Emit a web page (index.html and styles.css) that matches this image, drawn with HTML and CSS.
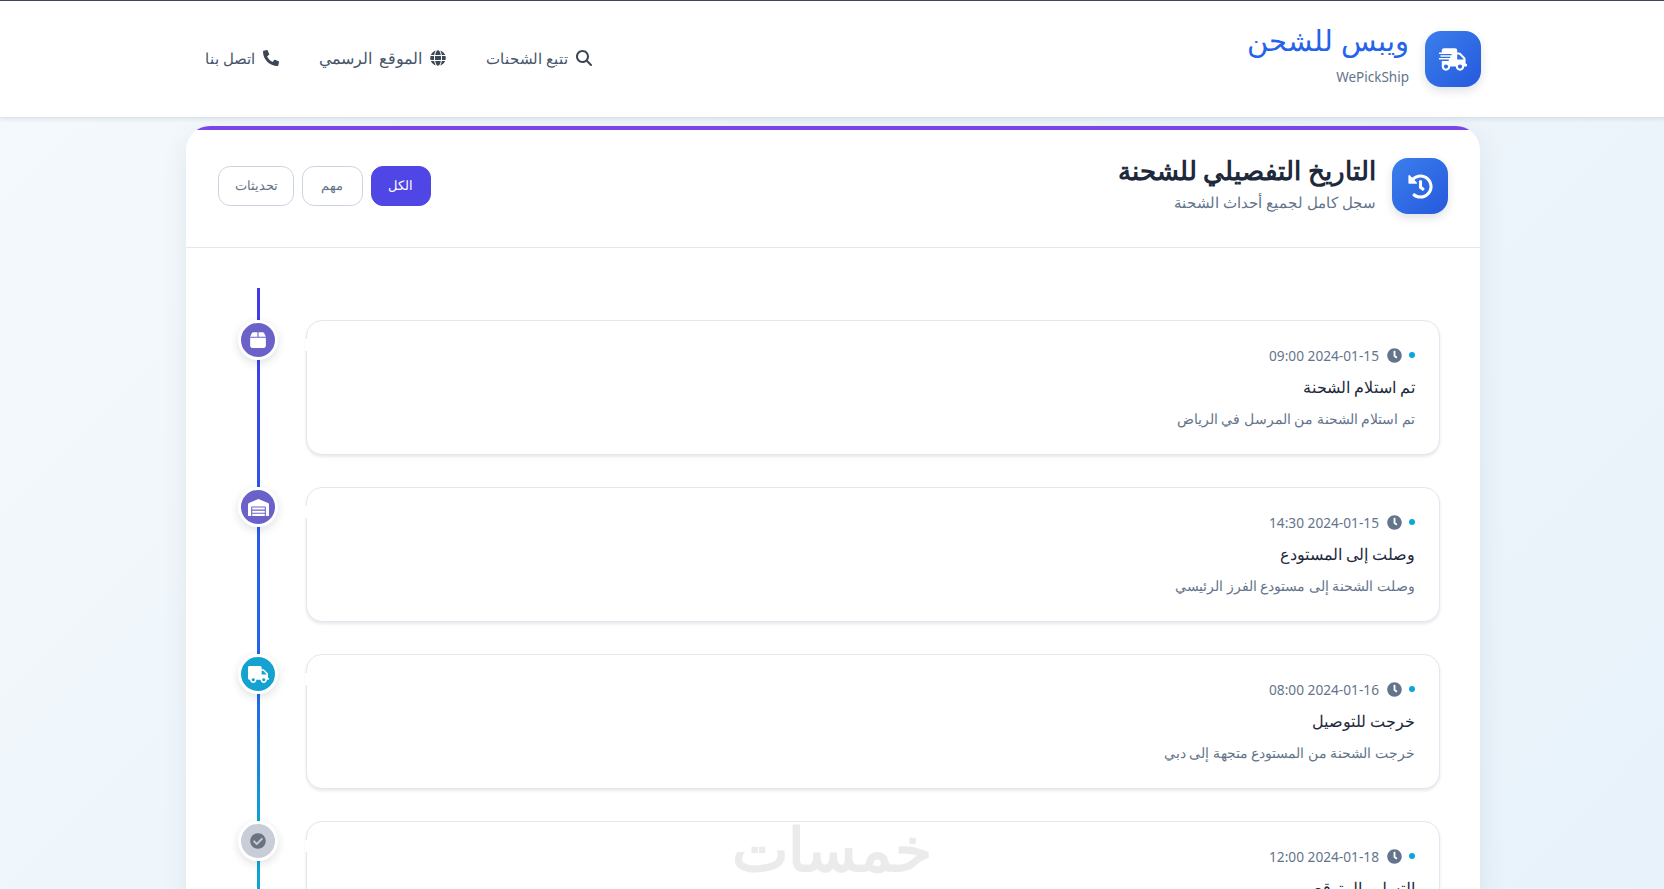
FILE: index.html
```html
<!DOCTYPE html>
<html lang="ar" dir="rtl">
<head>
  <meta charset="UTF-8">
  <meta name="viewport" content="width=device-width, initial-scale=1.0">
  <title>ويبس للشحن</title>
  <link rel="stylesheet" href="styles.css">
</head>
<body>
  <svg class="sprite" xmlns="http://www.w3.org/2000/svg">
    <symbol id="i-fast" viewBox="0 0 640 512"><path d="M624 352h-16V243.9c0-12.7-5.1-24.9-14.1-33.9L494 110.1c-9-9-21.2-14.1-33.9-14.1H416V48c0-26.5-21.5-48-48-48H112C85.5 0 64 21.5 64 48v48H8c-4.4 0-8 3.6-8 8v16c0 4.4 3.6 8 8 8h272c4.4 0 8 3.6 8 8v16c0 4.4-3.6 8-8 8H40c-4.4 0-8 3.6-8 8v16c0 4.4 3.6 8 8 8h208c4.4 0 8 3.6 8 8v16c0 4.4-3.6 8-8 8H8c-4.4 0-8 3.6-8 8v16c0 4.4 3.6 8 8 8h208c4.4 0 8 3.6 8 8v16c0 4.4-3.6 8-8 8H64v128c0 53 43 96 96 96s96-43 96-96h128c0 53 43 96 96 96s96-43 96-96h48c8.8 0 16-7.2 16-16v-32c0-8.8-7.2-16-16-16zM160 464c-26.5 0-48-21.5-48-48s21.5-48 48-48 48 21.5 48 48-21.5 48-48 48zm320 0c-26.5 0-48-21.5-48-48s21.5-48 48-48 48 21.5 48 48-21.5 48-48 48zm80-208H416V144h44.1l99.9 99.9V256z"/></symbol>
    <symbol id="i-truck" viewBox="0 0 640 512"><path d="M624 352h-16V243.9c0-12.7-5.1-24.9-14.1-33.9L494 110.1c-9-9-21.2-14.1-33.9-14.1H416V48c0-26.5-21.5-48-48-48H48C21.5 0 0 21.5 0 48v320c0 26.5 21.5 48 48 48h16c0 53 43 96 96 96s96-43 96-96h128c0 53 43 96 96 96s96-43 96-96h48c8.8 0 16-7.2 16-16v-32c0-8.8-7.2-16-16-16zM160 464c-26.5 0-48-21.5-48-48s21.5-48 48-48 48 21.5 48 48-21.5 48-48 48zm320 0c-26.5 0-48-21.5-48-48s21.5-48 48-48 48 21.5 48 48-21.5 48-48 48zm80-208H416V144h44.1l99.9 99.9V256z"/></symbol>
    <symbol id="i-history" viewBox="0 0 512 512"><path d="M504 255.531c.253 136.64-111.18 248.372-247.82 248.468-59.015.042-113.223-20.53-155.822-54.911-11.077-8.94-11.905-25.541-1.839-35.607l11.267-11.267c8.609-8.609 22.353-9.551 31.891-1.984C173.062 425.135 212.781 440 256 440c101.705 0 184-82.311 184-184 0-101.705-82.311-184-184-184-48.814 0-93.149 18.969-126.068 49.932l50.754 50.754c10.08 10.08 2.941 27.314-11.313 27.314H24c-8.837 0-16-7.163-16-16V38.627c0-14.254 17.234-21.393 27.314-11.314l49.372 49.372C129.209 34.136 189.552 8 256 8c136.81 0 247.747 110.78 248 247.531zm-180.912 78.784l9.823-12.63c8.138-10.463 6.253-25.542-4.21-33.679L288 256.349V152c0-13.255-10.745-24-24-24h-16c-13.255 0-24 10.745-24 24v135.651l65.409 50.874c10.463 8.137 25.541 6.253 33.679-4.21z"/></symbol>
    <symbol id="i-search" viewBox="0 0 512 512"><path d="M416 208c0 45.9-14.9 88.3-40 122.7L502.6 457.4c12.5 12.5 12.5 32.8 0 45.3s-32.8 12.5-45.3 0L330.7 376c-34.4 25.2-76.8 40-122.7 40C93.1 416 0 322.9 0 208S93.1 0 208 0S416 93.1 416 208zM208 352a144 144 0 1 0 0-288 144 144 0 1 0 0 288z"/></symbol>
    <symbol id="i-globe" viewBox="0 0 496 512"><path d="M336.5 160C322 70.7 287.8 8 248 8s-74 62.7-88.5 152h177zM152 256c0 22.2 1.2 43.5 3.3 64h185.3c2.1-20.5 3.3-41.8 3.3-64s-1.2-43.5-3.3-64H155.3c-2.1 20.5-3.3 41.8-3.3 64zm324.7-96c-28.6-67.9-86.5-120.4-158-141.6 24.4 33.8 41.2 84.7 50 141.6h108zM177.2 18.4C105.8 39.6 47.8 92.1 19.3 160h108c8.7-56.9 25.5-107.8 49.9-141.6zM487.4 192H372.7c2.1 21 3.3 42.5 3.3 64s-1.2 43-3.3 64h114.6c5.5-20.5 8.6-41.8 8.6-64s-3.1-43.5-8.5-64zM120 256c0-21.5 1.2-43 3.3-64H8.6C3.2 212.5 0 233.8 0 256s3.2 43.5 8.6 64h114.6c-2-21-3.2-42.5-3.2-64zm39.5 96c14.5 89.3 48.7 152 88.5 152s74-62.7 88.5-152h-177zm159.3 141.6c71.4-21.2 129.4-73.7 158-141.6h-108c-8.8 56.9-25.6 107.8-50 141.6zM19.3 352c28.6 67.9 86.5 120.4 158 141.6-24.4-33.8-41.2-84.7-50-141.6h-108z"/></symbol>
    <symbol id="i-phone" viewBox="0 0 512 512"><path d="M497.39 361.8l-112-48a24 24 0 0 0-28 6.9l-49.6 60.6A370.66 370.66 0 0 1 130.6 204.11l60.6-49.6a23.94 23.94 0 0 0 6.9-28l-48-112A24.16 24.16 0 0 0 122.6.61l-104 24A24 24 0 0 0 0 48c0 256.5 207.9 464 464 464a24 24 0 0 0 23.4-18.6l24-104a24.29 24.29 0 0 0-14.01-27.6z"/></symbol>
    <symbol id="i-clock" viewBox="0 0 512 512"><path d="M256 8C119 8 8 119 8 256s111 248 248 248 248-111 248-248S393 8 256 8zm92.49 313l-20 25a16 16 0 0 1-22.49 2.5l-67-49.72a40 40 0 0 1-15-31.23V112a16 16 0 0 1 16-16h32a16 16 0 0 1 16 16v144l58 42.5a16 16 0 0 1 2.49 22.5z"/></symbol>
    <symbol id="i-box" viewBox="0 0 448 512"><path d="M50.7 58.5L0 160H208V32H93.7C75.5 32 58.9 42.3 50.7 58.5zM240 160H448L397.3 58.5C389.1 42.3 372.5 32 354.3 32H240V160zm208 32H0V416c0 35.3 28.7 64 64 64H384c35.3 0 64-28.7 64-64V192z"/></symbol>
    <symbol id="i-warehouse" viewBox="0 0 640 512"><path d="M504 352H136.4c-4.4 0-8 3.6-8 8l-.1 48c0 4.4 3.6 8 8 8H504c4.4 0 8-3.6 8-8v-48c0-4.4-3.6-8-8-8zm0 96H136.1c-4.4 0-8 3.6-8 8l-.1 48c0 4.4 3.6 8 8 8h368c4.4 0 8-3.6 8-8v-48c0-4.4-3.6-8-8-8zm0-192H136.6c-4.4 0-8 3.6-8 8l-.1 48c0 4.4 3.6 8 8 8H504c4.4 0 8-3.6 8-8v-48c0-4.4-3.6-8-8-8zm106.5-139L338.4 3.7a48.15 48.15 0 0 0-36.9 0L29.5 117C11.7 124.5 0 141.9 0 161.3V504c0 4.4 3.6 8 8 8h80c4.4 0 8-3.6 8-8V256c0-17.6 14.6-32 32.6-32h382.8c18 0 32.6 14.4 32.6 32v248c0 4.4 3.6 8 8 8h80c4.4 0 8-3.6 8-8V161.3c0-19.4-11.7-36.8-29.5-44.3z"/></symbol>
    <symbol id="i-check" viewBox="0 0 512 512"><path d="M504 256c0 136.967-111.033 248-248 248S8 392.967 8 256 119.033 8 256 8s248 111.033 248 248zM227.314 387.314l184-184c6.248-6.248 6.248-16.379 0-22.627l-22.627-22.627c-6.248-6.249-16.379-6.249-22.628 0L216 308.118l-70.059-70.059c-6.248-6.248-16.379-6.248-22.628 0l-22.627 22.627c-6.248 6.248-6.248 16.379 0 22.627l104 104c6.249 6.25 16.379 6.25 22.628.001z"/></symbol>
  </svg>

  <header class="topbar">
    <div class="brand">
      <div class="icon-box"><svg class="icon-fast"><use href="#i-fast"/></svg></div>
      <div class="brand-text">
        <div class="brand-name">ويبس للشحن</div>
        <div class="brand-sub" dir="ltr">WePickShip</div>
      </div>
    </div>
    <nav class="nav">
      <a class="nav-link"><svg><use href="#i-search"/></svg>تتبع الشحنات</a>
      <a class="nav-link wide"><svg><use href="#i-globe"/></svg>الموقع الرسمي</a>
      <a class="nav-link"><svg><use href="#i-phone"/></svg>اتصل بنا</a>
    </nav>
  </header>

  <main class="panel">
    <div class="panel-head">
      <div class="panel-title">
        <div class="icon-box"><svg class="icon-history"><use href="#i-history"/></svg></div>
        <div class="panel-title-text">
          <h1>التاريخ التفصيلي للشحنة</h1>
          <p>سجل كامل لجميع أحداث الشحنة</p>
        </div>
      </div>
      <div class="filters">
        <button class="filter active">الكل</button>
        <button class="filter">مهم</button>
        <button class="filter">تحديثات</button>
      </div>
    </div>

    <div class="timeline">
      <div class="event">
        <div class="card">
          <div class="event-date"><span class="dot"></span><svg><use href="#i-clock"/></svg>2024-01-15 09:00</div>
          <h3>تم استلام الشحنة</h3>
          <p>تم استلام الشحنة من المرسل في الرياض</p>
        </div>
        <div class="node purple"><svg class="icon-box-small"><use href="#i-box"/></svg></div>
      </div>
      <div class="event">
        <div class="card">
          <div class="event-date"><span class="dot"></span><svg><use href="#i-clock"/></svg>2024-01-15 14:30</div>
          <h3>وصلت إلى المستودع</h3>
          <p>وصلت الشحنة إلى مستودع الفرز الرئيسي</p>
        </div>
        <div class="node purple"><svg class="icon-wide"><use href="#i-warehouse"/></svg></div>
      </div>
      <div class="event">
        <div class="card">
          <div class="event-date"><span class="dot"></span><svg><use href="#i-clock"/></svg>2024-01-16 08:00</div>
          <h3>خرجت للتوصيل</h3>
          <p>خرجت الشحنة من المستودع متجهة إلى دبي</p>
        </div>
        <div class="node cyan"><svg class="icon-wide"><use href="#i-truck"/></svg></div>
      </div>
      <div class="event">
        <div class="card">
          <div class="event-date"><span class="dot"></span><svg><use href="#i-clock"/></svg>2024-01-18 12:00</div>
          <h3>التسليم المتوقع</h3>
        </div>
        <div class="node grey"><svg class="icon-check"><use href="#i-check"/></svg></div>
      </div>
    </div>
  </main>

  <div class="watermark">خمسات</div>
</body>
</html>
```

FILE: styles.css
```css
* {
  box-sizing: border-box;
}

html, body {
  height: 100vh;
  overflow: hidden;
}

body {
  margin: 0;
  font-family: "Noto Sans", "Open Sans", sans-serif;
  background: linear-gradient(135deg, #f4f9fc, #e8f2fa);
  color: #1e293b;
}

.sprite {
  display: none;
}

/* top bar */
.topbar {
  height: 118px;
  padding: 0 183px 0 185px;
  background: #fff;
  border-top: 1px solid #3d4655;
  border-bottom: 1px solid #dde3ea;
  box-shadow: 0 2px 4px rgba(30, 41, 59, .08);
  display: flex;
  justify-content: space-between;
  align-items: center;
}

.brand {
  display: flex;
  align-items: center;
  gap: 16px;
}

.icon-box {
  width: 56px;
  height: 56px;
  border-radius: 16px;
  background: linear-gradient(135deg, #3b7fec, #2559dd);
  box-shadow: 0 4px 10px rgba(30, 41, 59, .14);
  display: flex;
  align-items: center;
  justify-content: center;
  fill: #fff;
  flex-shrink: 0;
}

.icon-fast {
  width: 28px;
  height: 23px;
}

.icon-history {
  width: 25px;
  height: 25px;
}

.brand-text {
  padding-bottom: 7px;
}

.brand-name {
  font-size: 29px;
  line-height: 30px;
  font-weight: 500;
  color: #2563eb;
}

.brand-sub {
  font-size: 13.5px;
  line-height: 18px;
  margin-top: 13px;
  color: #64748b;
  text-align: right;
}

.nav {
  display: flex;
  margin-top: -2px;
}

.nav-link {
  display: flex;
  align-items: center;
  gap: 8px;
  padding: 8px 20px;
  font-size: 15px;
  color: #475569;
}

.nav-link.wide {
  font-size: 16px;
  word-spacing: 3px;
}

.nav-link svg {
  width: 16px;
  height: 16px;
  fill: #3d4655;
}

/* main panel */
.panel {
  position: relative;
  margin: 8px 184px 0 186px;
  height: 900px;
  background: #fff;
  border-radius: 24px;
  box-shadow: 0 8px 28px rgba(30, 41, 59, .08);
  overflow: hidden;
}

.panel::before {
  content: "";
  position: absolute;
  top: 0;
  left: 0;
  right: 0;
  height: 4px;
  background: #7c45e8;
}

.panel-head {
  height: 122px;
  padding: 0 32px 1px;
  border-bottom: 1px solid #e2e8f0;
  display: flex;
  justify-content: space-between;
  align-items: center;
}

.panel-title {
  display: flex;
  align-items: center;
  gap: 16px;
}

.panel-title-text {
  padding-bottom: 4px;
}

h1 {
  margin: 0;
  font-size: 25.6px;
  line-height: 30px;
  font-weight: 700;
  color: #1e293b;
}

.panel-title p {
  margin: 6px 0 0;
  font-size: 15px;
  line-height: 20px;
  color: #64748b;
}

.filters {
  display: flex;
  gap: 8px;
}

.filter {
  height: 40px;
  min-width: 60.5px;
  padding: 0 15.5px 2px;
  border: 1px solid #cbd5e1;
  border-radius: 12px;
  background: #fff;
  font: inherit;
  font-size: 13px;
  color: #64748b;
}

.filter.active {
  background: #4f46e5;
  border-color: #4f46e5;
  color: #fff;
}

/* timeline */
.timeline {
  position: relative;
  padding: 72px 40px 0 52px;
  display: flex;
  flex-direction: column;
  gap: 32px;
}

.timeline::before {
  content: "";
  position: absolute;
  top: 40px;
  left: 71px;
  width: 3px;
  height: 700px;
  background: linear-gradient(#4338e8 0, #2563eb 300px, #2563eb 400px, #0ea5d0 540px);
}

.event {
  position: relative;
  display: flex;
  gap: 28px;
}

.card {
  position: relative;
  flex: 1;
  height: 135px;
  padding: 22px 24px 22px;
  background: #fff;
  border: 1px solid #e2e8f0;
  border-radius: 16px;
  box-shadow: 0 2px 3px rgba(30, 41, 59, .1);
}

/* small gap in the card's edge, facing the node */
.card::before {
  content: "";
  position: absolute;
  top: 18px;
  left: -2px;
  width: 4px;
  height: 12px;
  background: #fff;
}

.event-date {
  display: flex;
  align-items: center;
  gap: 7.5px;
  height: 24px;
  font-size: 13.7px;
  color: #64748b;
}

.event-date svg {
  width: 15px;
  height: 15px;
  fill: #64748b;
}

.dot {
  width: 6px;
  height: 6px;
  border-radius: 50%;
  background: #0ea5d9;
}

.card h3 {
  margin: 7px 0 0;
  font-size: 16px;
  line-height: 26px;
  font-weight: 500;
  color: #1e293b;
}

.card p {
  margin: 7px 0 0;
  font-size: 13.6px;
  line-height: 24px;
  color: #64748b;
}

.node {
  position: relative;
  width: 40px;
  height: 40px;
  border: 3px solid #fff;
  border-radius: 50%;
  box-shadow: 0 3px 8px rgba(30, 41, 59, .14);
  display: flex;
  align-items: center;
  justify-content: center;
  fill: #fff;
  flex-shrink: 0;
}

.node.purple {
  background: #6a62c8;
}

.node.cyan {
  background: #14a3d0;
}

.node.grey {
  background: #c9cdd8;
  fill: #6b7280;
}

.icon-box-small {
  width: 16px;
  height: 18px;
}

.icon-wide {
  width: 21px;
  height: 17px;
}

.icon-check {
  width: 16px;
  height: 16px;
}

.watermark {
  position: absolute;
  top: 813px;
  left: 732px;
  width: 200px;
  text-align: center;
  font-size: 60px;
  line-height: 70px;
  font-weight: 700;
  color: #ebebeb;
}
```
